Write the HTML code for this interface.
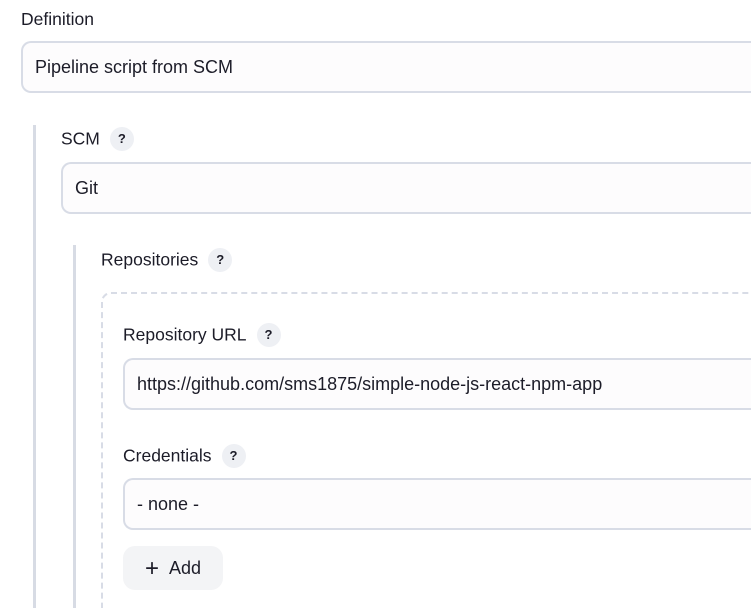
<!DOCTYPE html>
<html style="overflow:hidden;height:608px"><head><style>
body{margin:0;width:751px;height:608px;overflow:hidden;background:#fff;font-family:"Liberation Sans","Noto Sans CJK KR",sans-serif;color:#1c1c28;font-size:17.5px}
#w{position:relative;width:751px;height:608px;overflow:hidden}
.a{position:absolute}
.lbl{position:absolute;line-height:20px;white-space:nowrap}
.inp{position:absolute;left:0;height:52px;border:2px solid #d8dce6;border-right:none;border-radius:10px 0 0 10px;background:#fdfcfd;box-sizing:border-box;padding-left:12px;line-height:48px;white-space:nowrap;font-size:18px;right:0}
.q{display:inline-block;width:24px;height:24px;border-radius:50%;background:#eef0f4;font-size:13px;font-weight:bold;text-align:center;line-height:24px;margin-left:10px;vertical-align:middle;position:relative;top:-1px}
.bar{position:absolute;width:3px;background:#d7dbe4;bottom:0}
</style></head><body><div id="w">
<div class="lbl" style="left:21px;top:9px">Definition</div>
<div class="a" style="left:21px;top:41px;right:0;height:52px"><div class="inp">Pipeline script from SCM</div></div>
<div class="bar" style="left:33px;top:125px"></div>
<div class="lbl" style="left:61px;top:128px">SCM<span class="q">?</span></div>
<div class="a" style="left:61px;top:162px;right:0;height:52px"><div class="inp">Git</div></div>
<div class="bar" style="left:73px;top:245px"></div>
<div class="lbl" style="left:101px;top:249px">Repositories<span class="q">?</span></div>
<div class="a" style="left:101px;top:292px;right:0;bottom:0;border-top:2px dashed #d8dce6;border-left:2px dashed #d8dce6;border-radius:10px 0 0 0;box-sizing:border-box"></div>
<div class="lbl" style="left:123px;top:324px">Repository URL<span class="q">?</span></div>
<div class="a" style="left:123px;top:358px;right:0;height:52px"><div class="inp">https://github.com/sms1875/simple-node-js-react-npm-app</div></div>
<div class="lbl" style="left:123px;top:445px">Credentials<span class="q">?</span></div>
<div class="a" style="left:123px;top:478px;right:0;height:52px"><div class="inp">- none -</div></div>
<div class="a" style="left:123px;top:546px;width:100px;height:44px;background:#f3f4f6;border-radius:12px;line-height:44px;text-align:center;font-size:18px"><span style="font-size:24px;vertical-align:-2px;margin-right:10px">+</span>Add</div>
</div></body></html>
